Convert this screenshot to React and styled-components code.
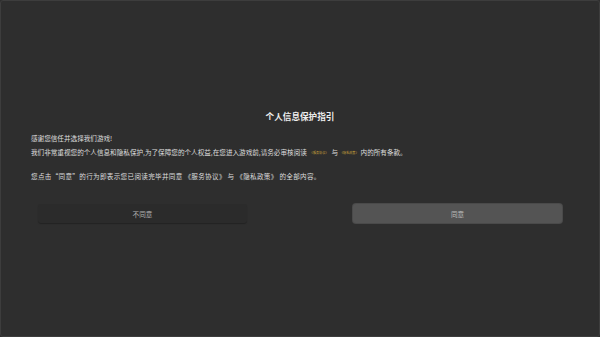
import React from 'react';
import styled, { createGlobalStyle } from 'styled-components';

const Global = createGlobalStyle`
  html, body {
    margin: 0;
    padding: 0;
    background: #2e2e2e;
  }
  #root {
    width: 600px;
    height: 337px;
  }
`;

const Frame = styled.div`
  box-sizing: border-box;
  width: 600px;
  height: 337px;
  padding-bottom: 4px;
  background: #2e2e2e;
  border: 1px solid #3d3d3d;
  border-radius: 3px;
  display: flex;
  flex-direction: column;
  justify-content: center;
  font-family: "Noto Sans CJK SC", "Noto Sans", sans-serif;
`;

const Title = styled.h1`
  margin: 0 0 9px;
  text-align: center;
  font-size: 8.6px;
  line-height: 12px;
  font-weight: 700;
  color: #ededed;
`;

const Body = styled.div`
  padding: 0 30px;
  color: #dedede;
  font-size: 6.6px;
  line-height: 14px;
`;

const Para = styled.p`
  margin: 0 0 ${(p) => p.$gap || 0}px;
  white-space: pre;
  letter-spacing: ${(p) => p.$spread || 0}px;
`;

const Link = styled.span`
  color: #c9a23a;
  font-size: 3.1px;
  margin: 0 ${(p) => p.$side || 4}px;
  vertical-align: 1px;
`;

const Actions = styled.div`
  display: flex;
  justify-content: space-between;
  padding: 0 37px;
  margin-top: 21px;
`;

const Button = styled.button`
  width: 209px;
  height: 19px;
  border-radius: 3px;
  font-family: inherit;
  font-size: 6.6px;
  cursor: pointer;
  border: none;
  background: ${(p) => (p.$primary ? '#545454' : '#2b2b2b')};
  color: ${(p) => (p.$primary ? '#bdbdbd' : '#b4b4b4')};
  box-shadow: ${(p) =>
    p.$primary ? '0 0 0 1px #4a4a4a' : '0 1px 1px rgba(0,0,0,0.25)'};
`;

export default function App() {
  return (
    <>
      <Global />
      <Frame>
        <Title>个人信息保护指引</Title>
        <Body>
          <Para>感谢您信任并选择我们游戏!</Para>
          <Para $gap={9}>
            我们非常重视您的个人信息和隐私保护,为了保障您的个人权益,在您进入游戏前,请务必审核阅读
            <Link $side={3}>《服务协议》</Link>与<Link $side={2}>《隐私政策》</Link>内的所有条款。
          </Para>
          <Para $spread={0.3}>您点击“同意”的行为即表示您已阅读完毕并同意 《服务协议》 与 《隐私政策》 的全部内容。</Para>
        </Body>
        <Actions>
          <Button>不同意</Button>
          <Button $primary>同意</Button>
        </Actions>
      </Frame>
    </>
  );
}
